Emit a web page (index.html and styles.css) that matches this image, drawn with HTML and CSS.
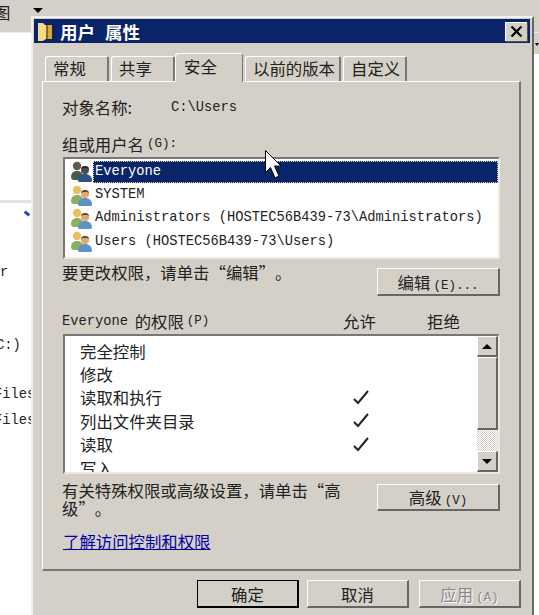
FILE: index.html
```html
<!DOCTYPE html>
<html lang="zh-CN">
<head>
  <meta charset="UTF-8">
  <title>用户 属性</title>
  <link rel="stylesheet" href="styles.css">
</head>
<body>
  <svg class="defs" width="0" height="0">
    <symbol id="users" viewBox="0 0 23 23">
      <circle cx="7" cy="6" r="4.2" fill="#e8c060"/>
      <path d="M1 18c0-5 2-7 6-7s6 2 6 7l-3 2H3z" fill="#8cb060"/>
      <circle cx="15" cy="10" r="4" fill="#e8a868"/>
      <path d="M11 9c0-4 8-4 8 0l-2-1h-4z" fill="#4a4a48"/>
      <path d="M8 21c0-5 3-7 7-7s7 2 7 7l-1 1H9z" fill="#5c94c8"/>
    </symbol>
    <symbol id="users-dark" viewBox="0 0 23 23">
      <circle cx="7" cy="6" r="4.2" fill="#5a5a50"/>
      <path d="M1 18c0-5 2-7 6-7s6 2 6 7l-3 2H3z" fill="#4a5c48"/>
      <circle cx="15" cy="10" r="4" fill="#504a50"/>
      <path d="M11 9c0-4 8-4 8 0l-2-1h-4z" fill="#26262e"/>
      <path d="M8 21c0-5 3-7 7-7s7 2 7 7l-1 1H9z" fill="#2c5488"/>
    </symbol>
    <symbol id="check" viewBox="0 0 16 15">
      <path d="M1 9l4 4L15 1" fill="none" stroke="#222" stroke-width="2"/>
    </symbol>
  </svg>

  <!-- Explorer window behind the dialog -->
  <div class="toolbar">
    <span class="toolbar-label">图</span>
    <span class="toolbar-arrow"></span>
  </div>
  <div class="explorer">
    <div class="tree">
      <div class="tree-rule"></div>
      <div class="tree-mark"></div>
      <div class="tree-row tree-r">r</div>
      <div class="tree-row tree-c">C:)</div>
      <div class="tree-row tree-f1">Files</div>
      <div class="tree-row tree-f2">Files</div>
    </div>
    <div class="side">
      <span class="side-arrow"></span>
    </div>
  </div>

  <!-- Properties dialog -->
  <div class="dialog">
    <div class="titlebar">
      <svg class="folder" width="17" height="21" viewBox="0 0 17 21">
        <path d="M1 2h5l2 2h1v14l-3 2H1z" fill="#f4dc88"/>
        <path d="M9 4h6v14H9z" fill="#d8a838"/>
        <path d="M9 4h2v14H9z" fill="#8a6a20"/>
      </svg>
      <span class="title-text">用户</span>
      <span class="title-text title-second">属性</span>
      <span class="close-btn">
        <svg width="13" height="11" viewBox="0 0 13 11">
          <path d="M1.5 .5l10 10M11.5 .5l-10 10" stroke="#000" stroke-width="2.2"/>
        </svg>
      </span>
    </div>

    <div class="tabs">
      <div class="tab tab-w64">常规</div>
      <div class="tab tab-w64 tab-gap">共享</div>
      <div class="tab tab-active">安全</div>
      <div class="tab tab-w96 tab-gap">以前的版本</div>
      <div class="tab tab-w64 tab-gap">自定义</div>
    </div>

    <div class="panel">
      <div class="object-row">
        <span class="object-label">对象名称:</span>
        <span class="mono">C:\Users</span>
      </div>

      <div class="group-label">组或用户名<span class="mono key">(G):</span></div>
      <div class="user-list">
        <div class="user-row">
          <svg class="user-icon"><use href="#users-dark"/></svg>
          <span class="user-name selected mono">Everyone</span>
        </div>
        <div class="user-row">
          <svg class="user-icon"><use href="#users"/></svg>
          <span class="user-name mono">SYSTEM</span>
        </div>
        <div class="user-row">
          <svg class="user-icon"><use href="#users"/></svg>
          <span class="user-name mono">Administrators (HOSTEC56B439-73\Administrators)</span>
        </div>
        <div class="user-row">
          <svg class="user-icon"><use href="#users"/></svg>
          <span class="user-name mono">Users (HOSTEC56B439-73\Users)</span>
        </div>
      </div>

      <div class="action-row">
        <span class="action-text">要更改权限，请单击“编辑”。</span>
        <button class="btn btn-side">编辑<span class="mono key">(E)...</span></button>
      </div>

      <div class="perm-head">
        <span class="perm-title"><span class="mono perm-name">Everyone</span> 的权限<span class="mono key">(P)</span></span>
        <span class="perm-col">允许</span>
        <span class="perm-col perm-deny">拒绝</span>
      </div>
      <div class="perm-list">
        <div class="perm-rows">
          <div class="perm-row">完全控制</div>
          <div class="perm-row">修改</div>
          <div class="perm-row">读取和执行<svg class="check"><use href="#check"/></svg></div>
          <div class="perm-row">列出文件夹目录<svg class="check"><use href="#check"/></svg></div>
          <div class="perm-row">读取<svg class="check"><use href="#check"/></svg></div>
          <div class="perm-row">写入</div>
        </div>
        <div class="scrollbar">
          <div class="scroll-btn"><span class="arrow-up"></span></div>
          <div class="scroll-thumb"></div>
          <div class="scroll-track"></div>
          <div class="scroll-btn"><span class="arrow-down"></span></div>
        </div>
      </div>

      <div class="advanced-row">
        <span class="advanced-text">有关特殊权限或高级设置，请单击“高<br>级”。</span>
        <button class="btn btn-side btn-short">高级<span class="mono key">(V)</span></button>
      </div>

      <a class="help-link" href="#">了解访问控制和权限</a>
    </div>

    <div class="footer">
      <button class="btn btn-foot btn-default">确定</button>
      <button class="btn btn-foot">取消</button>
      <button class="btn btn-foot btn-apply btn-disabled">应用<span class="mono key">(A)</span></button>
    </div>
  </div>

  <!-- Mouse pointer -->
  <svg class="cursor" width="17" height="29" viewBox="0 0 17 29">
    <path d="M.5.5v22l5-5 4.5 10.500 4-2L9.500 16h6.500z" fill="#fff" stroke="#000"/>
  </svg>
</body>
</html>
```

FILE: styles.css
```css
html, body {
  margin: 0;
  padding: 0;
  height: 100%;
}
body {
  position: relative;
  overflow: hidden;
  background-color: #d4d0c8;
  font-family: "Noto Sans CJK SC", sans-serif;
  font-size: 16.4px;
  color: #222;
  text-spacing-trim: space-all;
}
.defs {
  display: block;
}
.mono {
  font-family: "Liberation Mono", monospace;
  font-size: 13.75px;
}
.key {
  margin-left: 3px;
  font-size: 12.5px;
}

/* explorer behind the dialog */
.toolbar {
  height: 33px;
  position: relative;
  overflow: hidden;
  border-bottom: 1px solid #ecebe6;
  box-sizing: border-box;
}
.toolbar-label {
  display: block;
  margin-left: -6px;
  line-height: 24px;
}
.toolbar-arrow {
  position: absolute;
  left: 33px;
  top: 8px;
  border-left: 5px solid transparent;
  border-right: 5px solid transparent;
  border-top: 5px solid #000;
}
.explorer {
  display: flex;
  justify-content: space-between;
  height: 582px;
}
.tree {
  width: 31px;
  background-color: #fff;
  overflow: hidden;
  position: relative;
  white-space: nowrap;
}
.tree-rule {
  height: 3px;
  margin-top: 167px;
  background-color: #e4e2dc;
}
.tree-mark {
  width: 6px;
  height: 3px;
  margin: 9px 0 0 24px;
  background-color: #1c48b8;
  transform: rotate(40deg);
}
.tree-row {
  font-family: "Liberation Mono", monospace;
  font-size: 13.75px;
  line-height: 16px;
}
.tree-r {
  margin-top: 50px;
}
.tree-c {
  margin: 57px 0 0 -4px;
}
.tree-f1 {
  margin: 33px 0 0 -6px;
}
.tree-f2 {
  margin: 10px 0 0 -6px;
}
.side {
  width: 5px;
  padding-top: 10px;
  box-sizing: border-box;
  background: linear-gradient(#d4d0c8 21px, #fff 21px);
}
.side-arrow {
  display: block;
  margin-left: 1px;
  border-left: 2px solid transparent;
  border-right: 2px solid transparent;
  border-top: 3px solid #000;
  width: 0;
}

/* dialog */
.dialog {
  position: absolute;
  left: 31px;
  top: 16px;
  width: 503px;
  height: 620px;
  box-sizing: border-box;
  background-color: #d4d0c8;
  border-left: 2px solid #f2f1ed;
  border-top: 2px solid #f2f1ed;
  border-right: 2px solid #666;
}
.titlebar {
  display: flex;
  align-items: center;
  height: 24px;
  margin: 1px 2px 0 1px;
  padding-left: 3px;
  background-color: #0a246a;
}
.folder {
  margin-right: 6px;
}
.title-text {
  color: #fff;
  font-weight: 700;
  font-size: 17.5px;
}
.title-second {
  margin-left: 10px;
}
.close-btn {
  display: flex;
  align-items: center;
  justify-content: center;
  width: 21px;
  height: 18px;
  margin-left: auto;
  margin-right: 3px;
  background-color: #d4d0c8;
  border-top: 1px solid #fff;
  border-left: 1px solid #fff;
  box-shadow: 1px 1px 0 #555;
}

.tabs {
  display: flex;
  align-items: flex-end;
  height: 29px;
  margin-top: 10px;
  padding-left: 12px;
}
.tab {
  height: 25px;
  margin-bottom: 1px;
  padding-left: 7px;
  box-sizing: border-box;
  line-height: 23px;
  background-color: #d4d0c8;
  border-top: 1px solid #fff;
  border-left: 1px solid #fff;
  border-right: 2px solid #777;
  border-radius: 3px 3px 0 0;
}
.tab-w64 {
  width: 64px;
}
.tab-w96 {
  width: 96px;
}
.tab-gap {
  margin-left: 2px;
}
.tab-active {
  position: relative;
  z-index: 1;
  width: 68px;
  height: 29px;
  margin-bottom: 0;
  padding-left: 8px;
  line-height: 25px;
  border-right-width: 1px;
}
.panel {
  width: 479px;
  height: 490px;
  margin: -1px 0 0 9px;
  padding: 14px 19px 0 19px;
  box-sizing: border-box;
  border-top: 1px solid #fff;
  border-left: 1px solid #fff;
  border-right: 2px solid #777;
  border-bottom: 2px solid #777;
}
.object-row {
  display: flex;
  align-items: center;
  height: 22px;
}
.object-label {
  width: 109px;
}
.group-label {
  display: flex;
  align-items: center;
  height: 22px;
  margin-top: 15px;
}

.user-list {
  height: 102px;
  margin: 2px 0 0 1px;
  padding-top: 1px;
  box-sizing: border-box;
  background-color: #fff;
  border-top: 2px solid #777;
  border-left: 2px solid #777;
  border-right: 2px solid #ece9e3;
  border-bottom: 2px solid #ece9e3;
}
.user-row {
  display: flex;
  align-items: center;
  height: 23.4px;
  padding-left: 5px;
}
.user-icon {
  flex: none;
  width: 23px;
  height: 23px;
}
.user-name {
  flex: 1;
  height: 22px;
  line-height: 22px;
  padding-left: 2px;
  white-space: nowrap;
}
.selected {
  color: #fff;
  background-color: #0a246a;
  outline: 1px dotted #d8d4a8;
  outline-offset: -1px;
}

.action-row {
  display: flex;
  justify-content: space-between;
  margin-top: 9px;
}
.action-text {
  margin-top: -2px;
  line-height: 12px;
}
.btn {
  padding: 0;
  box-sizing: border-box;
  font-family: inherit;
  font-size: inherit;
  color: #222;
  background-color: #d4d0c8;
  border: 0;
  border-top: 1px solid #fff;
  border-left: 1px solid #fff;
  border-right: 2px solid #666;
  border-bottom: 2px solid #666;
}
.btn-side {
  width: 123px;
  height: 28px;
}
.btn-short {
  height: 27px;
}

.perm-head {
  display: flex;
  align-items: center;
  height: 22px;
  margin-top: 14px;
}
.perm-title {
  display: flex;
  align-items: center;
  width: 281px;
  white-space: pre;
}
.perm-name {
  margin-right: 3px;
}
.perm-col {
  width: 33px;
  white-space: nowrap;
}
.perm-deny {
  margin-left: 51px;
}
.perm-list {
  display: flex;
  height: 140px;
  margin: 2px 0 0 1px;
  box-sizing: border-box;
  background-color: #fff;
  border-top: 2px solid #777;
  border-left: 2px solid #777;
  border-right: 2px solid #ece9e3;
  border-bottom: 2px solid #ece9e3;
}
.perm-rows {
  flex: 1;
  padding: 3px 0 0 15px;
  overflow: hidden;
}
.perm-row {
  display: flex;
  align-items: center;
  height: 23.4px;
}
.check {
  flex: none;
  width: 16px;
  height: 15px;
  margin-left: auto;
  margin-right: 108px;
}
.scrollbar {
  display: flex;
  flex-direction: column;
  flex: none;
  width: 21px;
}
.scroll-btn {
  display: flex;
  align-items: center;
  justify-content: center;
  flex: none;
  height: 21px;
  box-sizing: border-box;
  background-color: #d4d0c8;
  border-top: 1px solid #fff;
  border-left: 1px solid #fff;
  border-right: 2px solid #666;
  border-bottom: 2px solid #666;
}
.arrow-up {
  border-left: 5px solid transparent;
  border-right: 5px solid transparent;
  border-bottom: 5px solid #000;
}
.arrow-down {
  border-left: 5px solid transparent;
  border-right: 5px solid transparent;
  border-top: 5px solid #000;
}
.scroll-thumb {
  flex: none;
  height: 73px;
  box-sizing: border-box;
  background-color: #d4d0c8;
  border-top: 1px solid #fff;
  border-left: 1px solid #fff;
  border-right: 2px solid #666;
  border-bottom: 2px solid #666;
}
.scroll-track {
  flex: 1;
  background-color: #e9e7e2;
  background-image: repeating-conic-gradient(#d4d0c8 0 25%, #fff 0 50%);
  background-size: 2px 2px;
}

.advanced-row {
  display: flex;
  justify-content: space-between;
  margin-top: 10px;
}
.advanced-text {
  line-height: 18px;
  margin-top: -3px;
}
.help-link {
  display: block;
  width: max-content;
  margin: 13px 0 0 1px;
  line-height: 22px;
  color: #0000a8;
}

.footer {
  display: flex;
  margin-top: 9px;
  padding-left: 164px;
}
.btn-foot {
  width: 102px;
  height: 28px;
  margin-right: 8px;
}
.btn-default {
  outline: 1px solid #000;
  outline-offset: -1px;
  border-right-color: #000;
  border-bottom-color: #000;
}
.btn-apply {
  margin-left: 2px;
  margin-right: 0;
}
.btn-disabled {
  color: #8a8a8a;
  text-shadow: 1px 1px 0 #fff;
}

.cursor {
  position: absolute;
  left: 265px;
  top: 150px;
}
```
